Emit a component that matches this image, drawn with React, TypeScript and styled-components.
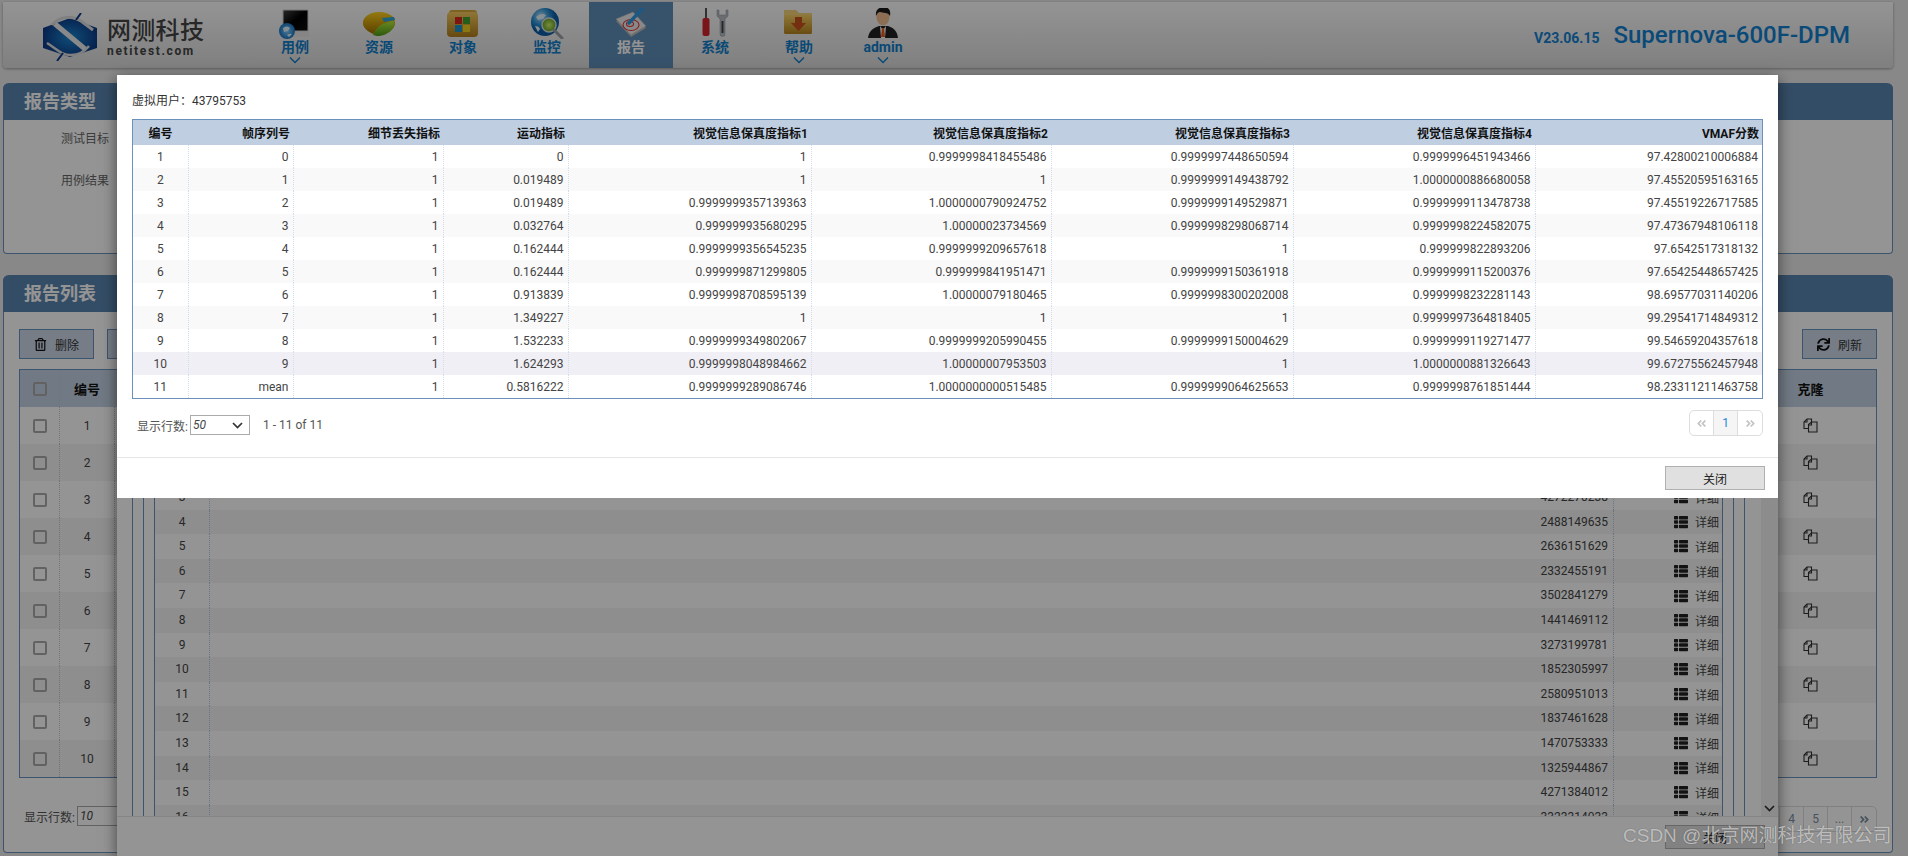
import React from "react";
import styled, { createGlobalStyle } from "styled-components";
import { FaSync, FaRegTrashAlt, FaThList, FaAngleDoubleLeft, FaAngleDoubleRight } from "react-icons/fa";

const Global = createGlobalStyle`
  html, body { margin: 0; padding: 0; height: 100%; overflow: hidden; background: #ebebeb; }
  body { font: 12px Roboto, "Noto Sans CJK SC", sans-serif; color: #444; }
  #root { height: 856px; }
  * { box-sizing: border-box; }
`;

const Page = styled.div`
  position: relative;
  width: 1908px;
  height: 856px;
  overflow: hidden;
  padding: 2px 15px 0 3px;
  background: #ebebeb;
`;
const Header = styled.header`
  display: flex;
  align-items: stretch;
  height: 66px;
  padding-left: 40px;
  border-radius: 0 0 4px 4px;
  background: linear-gradient(#fff, #dcdcdc);
  box-shadow: 0 1px 3px rgba(0, 0, 0, 0.35);
`;
const Brand = styled.div`
  display: flex;
  align-items: center;
  gap: 10px;
  width: 210px;
  padding-top: 4px;
`;
const BrandText = styled.div`
  display: flex;
  flex-direction: column;
  color: #444;
`;
const BrandName = styled.span`
  font-size: 24px;
  line-height: 27px;
  font-weight: 500;
  letter-spacing: 0.3px;
`;
const BrandUrl = styled.span`
  font-size: 12px;
  line-height: 12px;
  font-weight: 700;
  letter-spacing: 1.65px;
`;
const Nav = styled.nav`
  display: flex;
`;
const NavItem = styled.a<{ $active?: boolean }>`
  display: flex;
  flex-direction: column;
  align-items: center;
  width: 84px;
  padding-top: 6px;
  background: ${(p) => (p.$active ? "#5f8db9" : "transparent")};
  color: ${(p) => (p.$active ? "#fff" : "#0f7ecb")};
  font-size: 14px;
  font-weight: 700;
`;
const NavLabel = styled.span`
  line-height: 16px;
`;
const NavChevron = styled.svg`
  margin-top: 1px;
`;
const Version = styled.div`
  margin-left: auto;
  display: flex;
  align-items: baseline;
  gap: 14px;
  width: 359px;
  padding-top: 19px;
  color: #1280d0;
  font-weight: 500;
`;
const VersionNo = styled.span`
  font-size: 14px;
  font-weight: 700;
`;
const Product = styled.span`
  font-size: 24px;
`;
const Panel = styled.section<{ $height: number; $top: number }>`
  height: ${(p) => p.$height}px;
  margin-top: ${(p) => p.$top}px;
  background: #fff;
  border: 1px solid #6a92c0;
  border-top: 0;
  border-radius: 6px 6px 4px 4px;
  display: flex;
  flex-direction: column;
`;
const PanelHead = styled.h2`
  height: 37px;
  margin: 0 -1px;
  padding-left: 21px;
  border-radius: 6px 6px 0 0;
  background: #5b86b1;
  color: #fff;
  font-size: 18px;
  line-height: 37px;
  font-weight: 700;
  flex: none;
`;
const FieldList = styled.div`
  display: flex;
  flex-direction: column;
  gap: 25px;
  padding: 11px 0 0 0;
`;
const FieldLabel = styled.div`
  width: 105px;
  text-align: right;
  line-height: 17px;
  color: #666;
`;
const PanelBody = styled.div`
  flex: 1;
  padding: 17px 15px 0;
  display: flex;
  flex-direction: column;
`;
const Toolbar = styled.div`
  display: flex;
  gap: 13px;
  height: 30px;
`;
const ToolButton = styled.button<{ $push?: boolean }>`
  display: flex;
  align-items: center;
  justify-content: center;
  gap: 8px;
  width: 75px;
  height: 30px;
  margin-left: ${(p) => (p.$push ? "auto" : 0)};
  background: #ccd8e8;
  border: 1px solid #6a92c0;
  color: #333;
  font: 12px Roboto, "Noto Sans CJK SC", sans-serif;
  svg { color: #111; }
`;
const ListTable = styled.div`
  margin-top: 10px;
  border: 1px solid #6a92c0;
  height: 409px;
`;
const ListRow = styled.div<{ $head?: boolean; $alt?: boolean }>`
  display: grid;
  grid-template-columns: 40px 55px 1fr 131px;
  height: 37px;
  align-items: center;
  background: ${(p) => (p.$head ? "#c3d1e4" : p.$alt ? "#f4f4f4" : "#fff")};
  font-weight: ${(p) => (p.$head ? 700 : 400)};
  font-size: ${(p) => (p.$head ? 13 : 12)}px;
  color: ${(p) => (p.$head ? "#111" : "#444")};
`;
const ListCell = styled.div`
  height: 100%;
  display: flex;
  align-items: center;
  justify-content: center;
  border-right: 1px dotted #c4c9d0;
  &:last-child { border-right: 0; }
`;
const CheckBox = styled.span`
  width: 14px;
  height: 14px;
  border: 2px solid #aaa;
  border-radius: 2px;
  background: transparent;
`;
const ListFooter = styled.div`
  display: flex;
  justify-content: space-between;
  align-items: flex-start;
  margin-top: 28px;
  padding-left: 5px;
`;
const RowsPicker = styled.div`
  display: flex;
  align-items: center;
  gap: 2px;
  height: 20px;
  color: #555;
`;
const SelectBox = styled.div`
  display: flex;
  align-items: center;
  justify-content: space-between;
  width: 60px;
  height: 20px;
  padding: 0 6px 0 2px;
  border: 1px solid #aaa;
  background: #fff;
  font-style: italic;
  color: #444;
`;
const RangeText = styled.span`
  margin-left: 13px;
  color: #555;
`;
const Pager = styled.div`
  display: flex;
  border: 1px solid #ddd;
  border-radius: 5px;
  height: 26px;
  background: #fff;
`;
const PagerCell = styled.span<{ $current?: boolean; $off?: boolean }>`
  width: 24px;
  display: flex;
  align-items: center;
  justify-content: center;
  border-right: 1px solid #ddd;
  color: ${(p) => (p.$current ? "#2c86d8" : p.$off ? "#c4c4c4" : "#7d8ea3")};
  background: ${(p) => (p.$current ? "#f5f5f5" : "transparent")};
  &:last-child { border-right: 0; }
`;
const BehindModal = styled.div`
  position: absolute;
  left: 117px;
  top: 75px;
  width: 1661px;
  height: 781px;
  background: #fff;
  box-shadow: 0 4px 14px rgba(0, 0, 0, 0.55);
  display: flex;
  flex-direction: column;
`;
const BehindBody = styled.div`
  height: 741px;
  overflow: hidden;
  display: flex;
  padding-left: 15px;
  flex: none;
`;
const NestBox = styled.div<{ $top?: number; $inner?: boolean }>`
  flex: 1;
  min-width: 0;
  display: flex;
  padding: ${(p) => p.$top ?? 0}px ${(p) => (p.$inner ? 0 : 10)}px 0;
  border-left: 1px solid #6a92c0;
  border-right: 1px solid #6a92c0;
`;
const ScrollTrack = styled.div`
  width: 33px;
  flex: none;
  display: flex;
  justify-content: flex-end;
  align-items: flex-end;
`;
const ScrollBar = styled.div`
  width: 17px;
  height: 100%;
  background: #f1f1f1;
  display: flex;
  justify-content: center;
  align-items: flex-end;
  padding-bottom: 4px;
`;
const InnerList = styled.div`
  flex: 1;
  min-width: 0;
`;
const InnerRow = styled.div<{ $alt?: boolean }>`
  display: grid;
  grid-template-columns: 55px 1fr 108px;
  height: 24.6px;
  align-items: center;
  background: ${(p) => (p.$alt ? "#f5f5f5" : "#fff")};
  color: #444;
`;
const InnerNum = styled.div`
  text-align: center;
  height: 100%;
  line-height: 24.6px;
  border-right: 1px dotted #b8c8dc;
`;
const InnerValue = styled.div`
  text-align: right;
  height: 100%;
  line-height: 24.6px;
  padding-right: 5px;
  border-right: 1px dotted #b8c8dc;
`;
const InnerAction = styled.div`
  display: flex;
  justify-content: flex-end;
  align-items: center;
  gap: 7px;
  padding-right: 3px;
  svg { color: #222; }
`;
const BehindFooter = styled.div`
  flex: 1;
  border-top: 1px solid #e5e5e5;
  display: flex;
  justify-content: flex-end;
  padding: 8px 13px 0 0;
`;
const CloseButton = styled.button`
  width: 100px;
  height: 24px;
  background: #e0e0e0;
  border: 1px solid #b0b0b0;
  color: #222;
  font: 12px Roboto, "Noto Sans CJK SC", sans-serif;
`;
const Backdrop = styled.div`
  position: absolute;
  inset: 0;
  background: rgba(0, 0, 0, 0.42);
`;
const TopModal = styled.div`
  position: absolute;
  left: 117px;
  top: 75px;
  width: 1661px;
  height: 423px;
  background: #fff;
  display: flex;
  flex-direction: column;
`;
const ModalBody = styled.div`
  flex: 1;
  padding: 18px 15px 0;
`;
const UserLine = styled.div`
  line-height: 17px;
  color: #333;
`;
const MetricWrap = styled.div`
  margin-top: 9px;
  border: 1px solid #6a90bb;
`;
const MetricTable = styled.table`
  width: 100%;
  table-layout: fixed;
  border-collapse: collapse;
  border-spacing: 0;
`;
const MetricHead = styled.th<{ $center?: boolean }>`
  height: 25px;
  padding: 0 3px;
  background: #bfcfe1;
  color: #111;
  font-size: 12px;
  font-weight: 700;
  text-align: ${(p) => (p.$center ? "center" : "right")};
`;
const MetricRow = styled.tr<{ $tone: number }>`
  height: 23px;
  background: ${(p) => (p.$tone === 2 ? "#f0eff5" : p.$tone === 1 ? "#f9f9f9" : "#fff")};
`;
const MetricCell = styled.td<{ $center?: boolean }>`
  padding: 0 4px;
  color: #444;
  font-size: 12px;
  text-align: ${(p) => (p.$center ? "center" : "right")};
  border-right: 1px dotted #d3deec;
  &:last-child { border-right: 0; }
`;
const ModalPager = styled.div`
  display: flex;
  justify-content: space-between;
  align-items: flex-start;
  margin-top: 11px;
  padding-left: 5px;
`;
const PickerLine = styled.div`
  display: flex;
  align-items: center;
  padding-top: 5px;
`;
const ModalFooter = styled.div`
  flex: none;
  height: 41px;
  border-top: 1px solid #e5e5e5;
  display: flex;
  justify-content: flex-end;
  padding: 8px 13px 0 0;
`;
const Watermark = styled.div`
  position: absolute;
  left: 1623px;
  top: 823px;
  font: 19px "Liberation Sans", "Noto Sans CJK SC", sans-serif;
  line-height: 26px;
  white-space: nowrap;
  color: rgba(255, 255, 255, 0.62);
  text-shadow: 0 0 1px rgba(0, 0, 0, 0.45);
`;

const Chevron = () => (
  <svg width="11" height="7" viewBox="0 0 11 7">
    <path d="M1 1l4.500 4.500L10 1" fill="none" stroke="#333" strokeWidth="1.700" />
  </svg>
);
const NavDown = () => (
  <NavChevron width="12" height="8" viewBox="0 0 12 8">
    <path d="M1 1.500l5 5 5-5" fill="none" stroke="currentColor" strokeWidth="1.400" />
  </NavChevron>
);

const Logo = () => (
  <svg width="54" height="48" viewBox="0 0 54 48">
    <defs>
      <radialGradient id="lg" cx="0.5" cy="0.5" r="0.6">
        <stop offset="0" stopColor="#1a86cf" />
        <stop offset="1" stopColor="#0b2f7d" />
      </radialGradient>
    </defs>
    <path d="M27 5L54 15V35L27 44L0 35V15Z" fill="url(#lg)" />
    <path d="M9 12C18 2 30 3 38 8L50 17" fill="none" stroke="#dcdcdc" strokeWidth="3" />
    <path d="M4 30C14 36 18 42 28 42 36 42 42 38 46 33" fill="none" stroke="#dcdcdc" strokeWidth="2.500" />
    <path d="M12 11L42 36" stroke="#ececec" strokeWidth="5" />
    <path d="M33 7L38 0M20 40L14 48" stroke="#0b3a8a" strokeWidth="2" />
  </svg>
);

const IconBase = styled.svg`
  display: block;
  flex: none;
`;
const Ico: React.FC<{ children: React.ReactNode }> = ({ children }) => (
  <IconBase width="44" height="31" viewBox="0 0 44 31">{children}</IconBase>
);

const IcoCase = () => (
  <Ico>
    <defs>
      <linearGradient id="m1" x1="0" y1="0" x2="1" y2="1"><stop offset="0" stopColor="#444" /><stop offset="0.5" stopColor="#000" /><stop offset="1" stopColor="#111" /></linearGradient>
      <radialGradient id="m2"><stop offset="0" stopColor="#7fd0ff" /><stop offset="1" stopColor="#1a74c4" /></radialGradient>
    </defs>
    <path d="M10 2H35V23H10Z" fill="url(#m1)" stroke="#cfcfcf" />
    <path d="M14 24H36V29H14Z" fill="#e6e6e6" />
    <circle cx="14" cy="23" r="8" fill="url(#m2)" />
    <path d="M10 20q4-3 7 0l-2 3-4 1zM14 27q3-2 5-1l-3 3z" fill="#dff4ff" />
  </Ico>
);
const IcoPie = () => (
  <Ico>
    <defs>
      <linearGradient id="p1" x1="0" y1="0" x2="0" y2="1"><stop offset="0" stopColor="#ffd21c" /><stop offset="1" stopColor="#a06f00" /></linearGradient>
      <linearGradient id="p2" x1="0" y1="0" x2="0" y2="1"><stop offset="0" stopColor="#b6ea3a" /><stop offset="1" stopColor="#4f9a16" /></linearGradient>
    </defs>
    <ellipse cx="22" cy="15" rx="16" ry="11" fill="url(#p1)" />
    <path d="M6 16C8 21 12 24 16 26 18 19 24 13 38 11 32 3 18 2 10 8 7 10 6 13 6 16Z" fill="url(#p1)" />
    <path d="M16 27C18 20 25 14 37 13 39 20 31 28 20 28Z" fill="url(#p2)" />
    <path d="M25 10L37 9 38 12 27 14Z" fill="#2ea7dc" />
  </Ico>
);
const IcoFolder = () => (
  <Ico>
    <defs>
      <linearGradient id="f1" x1="0" y1="0" x2="0" y2="1"><stop offset="0" stopColor="#f6cb60" /><stop offset="1" stopColor="#b17f1a" /></linearGradient>
    </defs>
    <rect x="8" y="2" width="28" height="6" rx="3" fill="#d9a93a" />
    <rect x="6" y="4" width="31" height="25" rx="4" fill="url(#f1)" />
    <rect x="14" y="9" width="7" height="7" fill="#d8261c" />
    <rect x="22" y="9" width="7" height="7" fill="#3fa32d" />
    <rect x="14" y="17" width="7" height="7" fill="#1f93c8" />
    <rect x="22" y="17" width="7" height="7" fill="#f2cf1c" />
  </Ico>
);
const IcoWatch = () => (
  <Ico>
    <defs>
      <radialGradient id="w1" cx="0.35" cy="0.3"><stop offset="0" stopColor="#bfe8ff" /><stop offset="0.6" stopColor="#2c92d6" /><stop offset="1" stopColor="#0d5ea6" /></radialGradient>
      <radialGradient id="w2"><stop offset="0" stopColor="#d4f070" /><stop offset="1" stopColor="#5ea51e" /></radialGradient>
    </defs>
    <circle cx="20" cy="14" r="14" fill="url(#w1)" />
    <path d="M11 9q5-5 10-2l-3 4-5 1zM10 18q4 0 5 3l-2 3z" fill="#e6f6ff" />
    <circle cx="24" cy="17" r="7" fill="url(#w2)" stroke="#d5dde2" strokeWidth="1.500" />
    <path d="M29 22L37 30" stroke="#9a9fa5" strokeWidth="3" strokeLinecap="round" />
  </Ico>
);
const IcoReport = () => (
  <Ico>
    <path d="M7 13L24 6 37 20 22 29Z" fill="#bcbcbc" />
    <path d="M7 11L24 4 37 18 22 27Z" fill="#ececec" stroke="#b5b5b5" strokeWidth="0.600" />
    <ellipse cx="22" cy="17" rx="8" ry="5.500" fill="none" stroke="#d33" strokeWidth="1.100" />
    <ellipse cx="21" cy="16" rx="3.500" ry="2.500" fill="none" stroke="#d33" strokeWidth="1.100" />
    <path d="M20 15L33 1" stroke="#2e9be6" strokeWidth="3.400" strokeLinecap="round" />
  </Ico>
);
const IcoTools = () => (
  <Ico>
    <rect x="12" y="0" width="2" height="11" fill="#555" />
    <rect x="9.500" y="10" width="7" height="18" rx="2" fill="#d2262b" />
    <path d="M24 2v6l3 3v15a2.500 2.500 0 0 0 5 0V11l3-3V2l-2 0v5h-7V2Z" fill="#b7bcc2" stroke="#8a8f95" strokeWidth="0.500" />
    <rect x="28.500" y="13" width="2" height="12" fill="#444" />
  </Ico>
);
const IcoHelp = () => (
  <Ico>
    <defs>
      <linearGradient id="h1" x1="0" y1="0" x2="0" y2="1"><stop offset="0" stopColor="#f4cf63" /><stop offset="1" stopColor="#b6831d" /></linearGradient>
    </defs>
    <path d="M7 2H19L22 5H35V12H7Z" fill="#f3d27a" />
    <rect x="7" y="7" width="28" height="19" rx="1.500" fill="url(#h1)" />
    <path d="M18 9H25V15H29L21.500 23 14 15H18Z" fill="#c8501c" />
  </Ico>
);
const IcoUser = () => (
  <Ico>
    <path d="M7 30C8 22 13 20 18 18H27C32 20 36 22 37 30Z" fill="#222" />
    <path d="M19 18L22 22 25 18 24 30H20Z" fill="#fff" />
    <path d="M21 20H23L24 29H20Z" fill="#e8571c" />
    <ellipse cx="22" cy="9" rx="6.500" ry="8.500" fill="#f2bd92" />
    <path d="M15 8C14 1 19-1 23-1 28-1 30 3 29 8 27 4 22 5 19 4 17 4 16 6 15 8Z" fill="#1b1b1b" />
  </Ico>
);

const navItems: { label: string; icon: React.ReactNode; down?: boolean; active?: boolean }[] = [
  { label: "用例", icon: <IcoCase />, down: true },
  { label: "资源", icon: <IcoPie /> },
  { label: "对象", icon: <IcoFolder /> },
  { label: "监控", icon: <IcoWatch /> },
  { label: "报告", icon: <IcoReport />, active: true },
  { label: "系统", icon: <IcoTools /> },
  { label: "帮助", icon: <IcoHelp />, down: true },
  { label: "admin", icon: <IcoUser />, down: true },
];

const metricHeads = ["编号", "帧序列号", "细节丢失指标", "运动指标", "视觉信息保真度指标1", "视觉信息保真度指标2", "视觉信息保真度指标3", "视觉信息保真度指标4", "VMAF分数"];
const metricWidths = [55, 105, 150, 125, 243, 240, 242, 242, 227];
const metricRows: string[][] = [
  ["1", "0", "1", "0", "1", "0.9999998418455486", "0.9999997448650594", "0.9999996451943466", "97.42800210006884"],
  ["2", "1", "1", "0.019489", "1", "1", "0.9999999149438792", "1.0000000886680058", "97.45520595163165"],
  ["3", "2", "1", "0.019489", "0.9999999357139363", "1.0000000790924752", "0.9999999149529871", "0.9999999113478738", "97.45519226717585"],
  ["4", "3", "1", "0.032764", "0.999999935680295", "1.00000023734569", "0.9999998298068714", "0.9999998224582075", "97.47367948106118"],
  ["5", "4", "1", "0.162444", "0.9999999356545235", "0.9999999209657618", "1", "0.999999822893206", "97.6542517318132"],
  ["6", "5", "1", "0.162444", "0.999999871299805", "0.999999841951471", "0.9999999150361918", "0.9999999115200376", "97.65425448657425"],
  ["7", "6", "1", "0.913839", "0.9999998708595139", "1.00000079180465", "0.9999998300202008", "0.9999998232281143", "98.69577031140206"],
  ["8", "7", "1", "1.349227", "1", "1", "1", "0.9999997364818405", "99.29541714849312"],
  ["9", "8", "1", "1.532233", "0.9999999349802067", "0.9999999205990455", "0.9999999150004629", "0.9999999119271477", "99.54659204357618"],
  ["10", "9", "1", "1.624293", "0.9999998048984662", "1.00000007953503", "1", "1.0000000881326643", "99.67275562457948"],
  ["11", "mean", "1", "0.5816222", "0.9999999289086746", "1.0000000000515485", "0.9999999064625653", "0.9999998761851444", "98.23311211463758"],
];
const behindRows: [number, string][] = [
  [3, "4272270238"], [4, "2488149635"], [5, "2636151629"], [6, "2332455191"], [7, "3502841279"],
  [8, "1441469112"], [9, "3273199781"], [10, "1852305997"], [11, "2580951013"], [12, "1837461628"],
  [13, "1470753333"], [14, "1325944867"], [15, "4271384012"], [16, "3323314033"],
];

const CloneIcon = () => (
  <svg width="15" height="15" viewBox="0 0 15 15" fill="none" stroke="#333" strokeWidth="1.100">
    <path d="M5.500 10.500H1V4L4 1H8.500V4" />
    <path d="M4 1V4H1" />
    <path d="M5.500 6.500L8.500 4H14V14H5.500Z" fill="#f6f6f6" />
    <path d="M8.500 4V7H5.500" />
  </svg>
);

export default function App() {
  return (
    <Page>
      <Global />
      <Header>
        <Brand>
          <Logo />
          <BrandText>
            <BrandName>网测科技</BrandName>
            <BrandUrl>netitest.com</BrandUrl>
          </BrandText>
        </Brand>
        <Nav>
          {navItems.map((n) => (
            <NavItem key={n.label} $active={n.active}>
              {n.icon}
              <NavLabel>{n.label}</NavLabel>
              {n.down && <NavDown />}
            </NavItem>
          ))}
        </Nav>
        <Version>
          <VersionNo>V23.06.15</VersionNo>
          <Product>Supernova-600F-DPM</Product>
        </Version>
      </Header>

      <Panel $height={171} $top={15}>
        <PanelHead>报告类型</PanelHead>
        <FieldList>
          <FieldLabel>测试目标</FieldLabel>
          <FieldLabel>用例结果</FieldLabel>
        </FieldList>
      </Panel>

      <Panel $height={578} $top={21}>
        <PanelHead>报告列表</PanelHead>
        <PanelBody>
          <Toolbar>
            <ToolButton><FaRegTrashAlt size={13} />删除</ToolButton>
            <ToolButton aria-label="操作" />
            <ToolButton $push><FaSync size={13} />刷新</ToolButton>
          </Toolbar>
          <ListTable>
            <ListRow $head>
              <ListCell><CheckBox /></ListCell>
              <ListCell>编号</ListCell>
              <ListCell />
              <ListCell>克隆</ListCell>
            </ListRow>
            {Array.from({ length: 10 }, (_, i) => (
              <ListRow key={i} $alt={i % 2 === 1}>
                <ListCell><CheckBox /></ListCell>
                <ListCell>{i + 1}</ListCell>
                <ListCell />
                <ListCell><CloneIcon /></ListCell>
              </ListRow>
            ))}
          </ListTable>
          <ListFooter>
            <RowsPicker>
              显示行数:
              <SelectBox>10<Chevron /></SelectBox>
            </RowsPicker>
            <Pager>
              <PagerCell $off><FaAngleDoubleLeft size={11} /></PagerCell>
              <PagerCell $current>1</PagerCell>
              <PagerCell>2</PagerCell>
              <PagerCell>3</PagerCell>
              <PagerCell>4</PagerCell>
              <PagerCell>5</PagerCell>
              <PagerCell>...</PagerCell>
              <PagerCell><FaAngleDoubleRight size={11} /></PagerCell>
            </Pager>
          </ListFooter>
        </PanelBody>
      </Panel>

      <BehindModal>
        <BehindBody>
          <NestBox>
            <NestBox>
              <NestBox $top={410} $inner>
                <InnerList>
                  {behindRows.map(([n, v]) => (
                    <InnerRow key={n} $alt={n % 2 === 0}>
                      <InnerNum>{n}</InnerNum>
                      <InnerValue>{v}</InnerValue>
                      <InnerAction><FaThList size={14} />详细</InnerAction>
                    </InnerRow>
                  ))}
                </InnerList>
              </NestBox>
            </NestBox>
          </NestBox>
          <ScrollTrack>
            <ScrollBar><Chevron /></ScrollBar>
          </ScrollTrack>
        </BehindBody>
        <BehindFooter>
          <CloseButton>关闭</CloseButton>
        </BehindFooter>
      </BehindModal>

      <Backdrop />

      <TopModal>
        <ModalBody>
          <UserLine>虚拟用户：43795753</UserLine>
          <MetricWrap>
            <MetricTable>
              <colgroup>
                {metricWidths.map((w, i) => <col key={i} width={w} />)}
              </colgroup>
              <thead>
                <tr>
                  {metricHeads.map((h, i) => <MetricHead key={h} $center={i === 0}>{h}</MetricHead>)}
                </tr>
              </thead>
              <tbody>
                {metricRows.map((r, i) => (
                  <MetricRow key={i} $tone={i === 9 ? 2 : i % 2}>
                    {r.map((c, j) => <MetricCell key={j} $center={j === 0}>{c}</MetricCell>)}
                  </MetricRow>
                ))}
              </tbody>
            </MetricTable>
          </MetricWrap>
          <ModalPager>
            <PickerLine>
              <RowsPicker>
                显示行数:
                <SelectBox>50<Chevron /></SelectBox>
              </RowsPicker>
              <RangeText>1 - 11 of 11</RangeText>
            </PickerLine>
            <Pager>
              <PagerCell $off><FaAngleDoubleLeft size={11} /></PagerCell>
              <PagerCell $current>1</PagerCell>
              <PagerCell $off><FaAngleDoubleRight size={11} /></PagerCell>
            </Pager>
          </ModalPager>
        </ModalBody>
        <ModalFooter>
          <CloseButton>关闭</CloseButton>
        </ModalFooter>
      </TopModal>

      <Watermark>CSDN @北京网测科技有限公司</Watermark>
    </Page>
  );
}
